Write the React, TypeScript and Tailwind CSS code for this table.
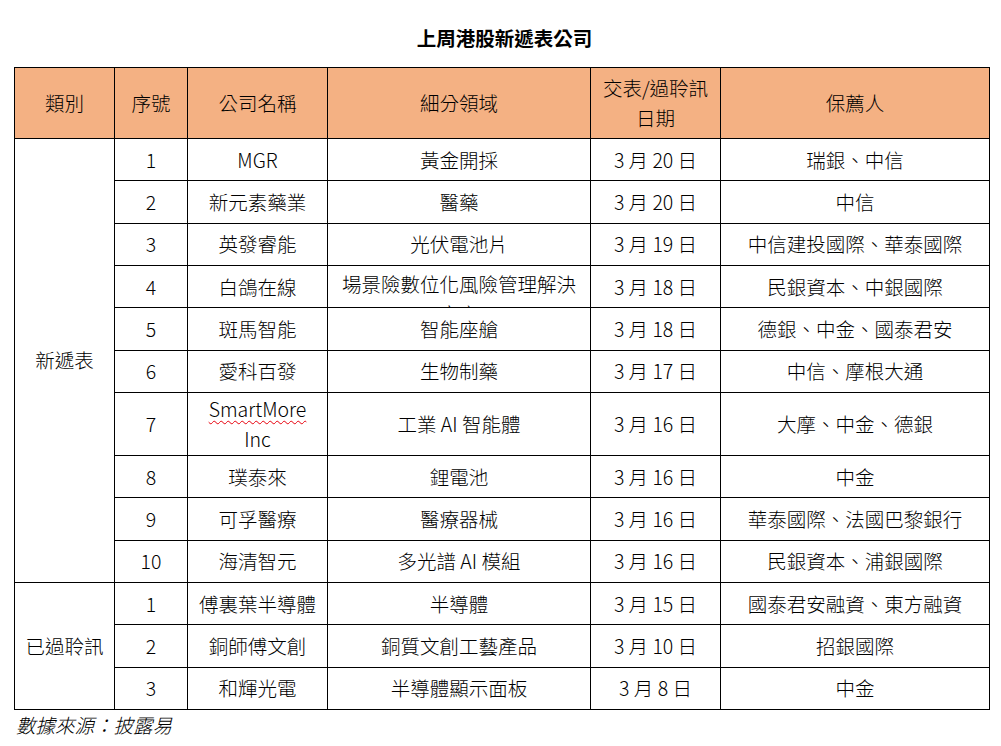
import React from 'react';

// IPO filings table data
const newFilings = [
  { no: 1, name: 'MGR', sector: '黃金開採', date: '3 月 20 日', sponsor: '瑞銀、中信' },
  { no: 2, name: '新元素藥業', sector: '醫藥', date: '3 月 20 日', sponsor: '中信' },
  { no: 3, name: '英發睿能', sector: '光伏電池片', date: '3 月 19 日', sponsor: '中信建投國際、華泰國際' },
  { no: 4, name: '白鴿在線', sector: '場景險數位化風險管理解決方案', date: '3 月 18 日', sponsor: '民銀資本、中銀國際' },
  { no: 5, name: '斑馬智能', sector: '智能座艙', date: '3 月 18 日', sponsor: '德銀、中金、國泰君安' },
  { no: 6, name: '愛科百發', sector: '生物制藥', date: '3 月 17 日', sponsor: '中信、摩根大通' },
  { no: 7, name: 'SmartMore Inc', sector: '工業 AI 智能體', date: '3 月 16 日', sponsor: '大摩、中金、德銀' },
  { no: 8, name: '璞泰來', sector: '鋰電池', date: '3 月 16 日', sponsor: '中金' },
  { no: 9, name: '可孚醫療', sector: '醫療器械', date: '3 月 16 日', sponsor: '華泰國際、法國巴黎銀行' },
  { no: 10, name: '海清智元', sector: '多光譜 AI 模組', date: '3 月 16 日', sponsor: '民銀資本、浦銀國際' },
];

const heardFilings = [
  { no: 1, name: '傅裏葉半導體', sector: '半導體', date: '3 月 15 日', sponsor: '國泰君安融資、東方融資' },
  { no: 2, name: '銅師傅文創', sector: '銅質文創工藝產品', date: '3 月 10 日', sponsor: '招銀國際' },
  { no: 3, name: '和輝光電', sector: '半導體顯示面板', date: '3 月 8 日', sponsor: '中金' },
];

const cell = 'border border-black text-center align-middle p-0 font-light';

function Row({ row, group, span }: { row: typeof newFilings[number]; group?: string; span?: number }) {
  const tall = row.name.startsWith('Smart');
  const clipped = row.sector.length > 12;
  return (
    <tr className={tall ? 'h-[63px]' : 'h-[42.33px]'}>
      {group && (
        <td rowSpan={span} className={cell}>
          {group}
        </td>
      )}
      <td className={cell}>{row.no}</td>
      <td className={cell}>
        {tall ? (
          <div>
            <span className="underline decoration-wavy decoration-red-600 decoration-1 underline-offset-[3px]">SmartMore</span>
            <br />
            Inc
          </div>
        ) : (
          row.name
        )}
      </td>
      <td className={cell}>
        {clipped ? (
          <div className="h-[41px] overflow-hidden pt-[3px] px-[12px]">{row.sector}</div>
        ) : (
          row.sector
        )}
      </td>
      <td className={cell}>{row.date}</td>
      <td className={cell}>{row.sponsor}</td>
    </tr>
  );
}

export default function App() {
  return (
    <div
      className="w-[1001px] h-[746px] bg-white text-black text-[19.5px] leading-[30px] overflow-hidden"
      style={{ fontFamily: '"Noto Sans CJK TC", "Noto Sans", sans-serif' }}
    >
      <h1 className="pt-[23px] pl-[8px] text-center font-bold text-[19.5px] leading-[30px]">上周港股新遞表公司</h1>

      <table className="mt-[14px] ml-[14px] w-[975px] table-fixed border-collapse">
        <colgroup>
          <col className="w-[100px]" />
          <col className="w-[73px]" />
          <col className="w-[140px]" />
          <col className="w-[263px]" />
          <col className="w-[130px]" />
          <col className="w-[269px]" />
        </colgroup>
        <thead>
          <tr className="h-[71px] bg-[#F4B183]">
            <th className={cell}>類別</th>
            <th className={cell}>序號</th>
            <th className={cell}>公司名稱</th>
            <th className={cell}>細分領域</th>
            <th className={cell}>
              交表/過聆訊
              <br />
              日期
            </th>
            <th className={cell}>保薦人</th>
          </tr>
        </thead>
        <tbody>
          {newFilings.map((row, i) => (
            <Row key={`n${row.no}`} row={row} group={i === 0 ? '新遞表' : undefined} span={newFilings.length} />
          ))}
          {heardFilings.map((row, i) => (
            <Row key={`h${row.no}`} row={row} group={i === 0 ? '已過聆訊' : undefined} span={heardFilings.length} />
          ))}
        </tbody>
      </table>

      <p className="pl-[16px] italic font-light">數據來源：披露易</p>
    </div>
  );
}
